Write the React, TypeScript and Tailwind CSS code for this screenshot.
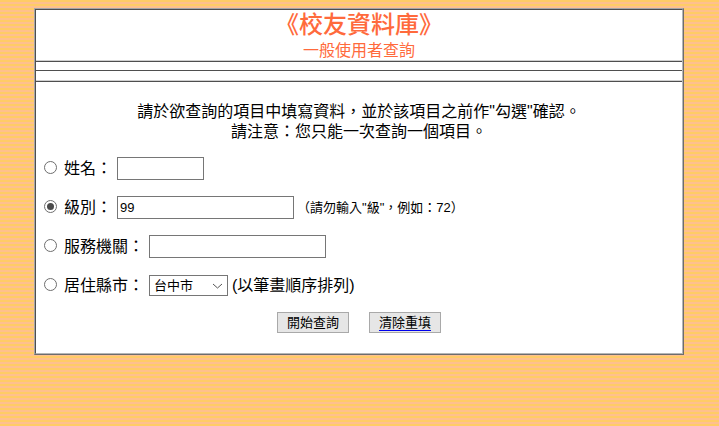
const cjk = "font-['Liberation_Sans','Noto_Sans_CJK_TC',sans-serif]";

function Radio({ checked }: { checked?: boolean }) {
  return (
    <span className="mb-[2px] w-[13px] h-[13px] rounded-full border border-[#6e6e6e] bg-white flex items-center justify-center shrink-0">
      {checked ? <span className="w-[7px] h-[7px] rounded-full bg-[#4a4a4a]" /> : null}
    </span>
  );
}

function Label({ children }: { children: React.ReactNode }) {
  return <span className="text-[16px] leading-[20px] text-black">{children}</span>;
}

function Field({ w, value }: { w: string; value?: string }) {
  return (
    <span className={`${w} h-[23px] border border-[#767676] bg-white pl-[2px] text-[13px] leading-[21px] text-black block`}>
      {value}
    </span>
  );
}

export default function App() {
  return (
    <div className={`w-[719px] h-[426px] overflow-hidden pt-[8px] pl-[34px] bg-[linear-gradient(to_bottom,#ffcc66_0,#ffcc66_2px,#ffc08e_2px,#ffc08e_4px)] bg-[length:100%_4px] ${cjk}`}>
      <div className="w-[650px] h-[347px] border border-t-[#a6a6a6] border-l-[#a6a6a6] border-r-[#6d6d6d] border-b-[#6d6d6d] bg-white">
        <div className="h-full border border-t-[#4f4f4f] border-l-[#4f4f4f] border-r-[#b5b5b5] border-b-[#b5b5b5] flex flex-col">
          <div className="h-[51px] flex flex-col items-center border-b border-b-[#cfcfcf]">
            <div className="text-[24px] leading-[30px] mb-[1px] text-[#ff6a3c] font-medium">《校友資料庫》</div>
            <div className="text-[16px] leading-[20px] text-[#ff6a3c]">一般使用者查詢</div>
          </div>
          <div className="h-[10px] border-t border-t-[#4f4f4f] border-b border-b-[#4f4f4f]" />
          <div className="h-[10px] border-b border-b-[#cfcfcf]" />
          <div className="flex-1 flex flex-col border-t border-t-[#4f4f4f] pt-[20px] pl-[8px]">
            <div className="text-[16px] leading-[20px] text-black text-center pr-[8px]">
              <div>請於欲查詢的項目中填寫資料，並於該項目之前作"勾選"確認。</div>
              <div>請注意：您只能一次查詢一個項目。</div>
            </div>
            <div className="mt-[15px] flex flex-col">
              <div className="h-[23px] flex items-center gap-[7px]">
                <Radio />
                <Label>姓名：</Label>
                <span className="-ml-[2px]"><Field w="w-[87px]" /></span>
              </div>
              <div className="mt-[16px] h-[23px] flex items-center gap-[7px]">
                <Radio checked />
                <Label>級別：</Label>
                <span className="-ml-[2px]"><Field w="w-[177px]" value="99" /></span>
                <span className="-ml-[4px] text-[13px] text-black">（請勿輸入"級"，例如：72）</span>
              </div>
              <div className="mt-[16px] h-[23px] flex items-center gap-[7px]">
                <Radio />
                <Label>服務機關：</Label>
                <span className="-ml-[2px]"><Field w="w-[177px]" /></span>
              </div>
              <div className="mt-[16px] h-[23px] flex items-center gap-[7px]">
                <Radio />
                <Label>居住縣市：</Label>
                <span className="-ml-[2px] w-[79px] h-[21px] border border-[#767676] bg-white flex items-center justify-between pl-[4px] pr-[4px] text-[13px] text-black">
                  台中市
                  <svg width="11" height="6" viewBox="0 0 11 6" fill="none" stroke="#555" strokeWidth="1"><path d="M1 1l4.5 4L10 1" /></svg>
                </span>
                <span className="-ml-[3px] text-[16px] leading-[20px] text-black">(以筆畫順序排列)</span>
              </div>
            </div>
            <div className="mt-[15px] flex justify-center gap-[20px] pr-[8px]">
              <span className="w-[72px] h-[21px] border border-[#a9a9a9] bg-[#e6e6e6] flex items-center justify-center text-[13px] text-black">開始查詢</span>
              <span className="w-[72px] h-[21px] border border-[#a9a9a9] bg-[#e6e6e6] flex items-center justify-center text-[13px] text-black underline decoration-[#0000ee] underline-offset-[3px]">清除重填</span>
            </div>
          </div>
        </div>
      </div>
    </div>
  );
}
